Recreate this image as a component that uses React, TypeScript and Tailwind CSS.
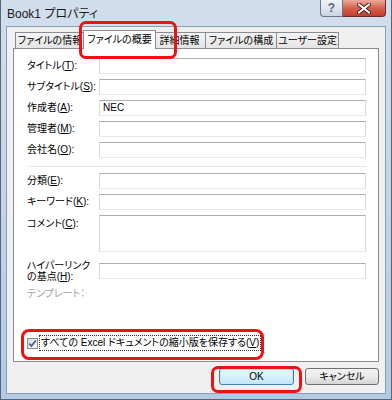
import React from 'react'

// Win7 style "Book1 プロパティ" dialog, summary tab selected

function Key({ k }: { k: string }) {
  return (
    <>
      (<span className="underline underline-offset-[1px]">{k}</span>):
    </>
  )
}

function Box({ className = '', children }: { className?: string; children?: React.ReactNode }) {
  return (
    <div className={`w-[267px] bg-white border border-t-[#abadb3] border-x-[#d5d9e0] border-b-[#e3e9ef] ${className}`}>
      {children}
    </div>
  )
}

function Row({ label, k, value }: { label: string; k: string; value?: string }) {
  return (
    <div className="flex h-[16px] items-center">
      <div className="w-[72px] whitespace-nowrap">
        {label}
        <Key k={k} />
      </div>
      <Box className="flex h-[16px] items-center pl-[3px]">{value}</Box>
    </div>
  )
}

const tabs = [
  { label: 'ファイルの情報', w: 'w-[70px]' },
  { label: 'ファイルの概要', w: 'w-[69px]', active: true },
  { label: '詳細情報', w: 'w-[52px]' },
  { label: 'ファイルの構成', w: 'w-[71px]' },
  { label: 'ユーザー設定', w: 'w-[62px]' }
]

export default function App() {
  return (
    <div className="relative flex h-[400px] w-[392px] flex-col overflow-hidden border-x border-b border-[#55657a] bg-linear-to-b from-[#d2deec] via-[#c3d4e9] to-[#b3cae5] font-['Liberation_Sans','Noto_Sans_CJK_JP',sans-serif] text-[10px] leading-none text-black [font-feature-settings:'palt']">
      {/* title bar */}
      <div className="flex h-[26px] shrink-0 items-start">
        <div className="pl-[6px] pt-[8px] text-[12px] text-[#1a1a1a]">Book1 プロパティ</div>
        <div className="mr-[5px] ml-auto flex">
          <div className="flex h-[17px] w-[23px] items-center justify-center rounded-bl-[4px] border border-t-0 border-[#6b7688] bg-linear-to-b from-[#eef2f7] via-[#dfe6ee] to-[#c9d4e1] text-[12px] font-bold text-[#596579]">
            ?
          </div>
          <div className="flex h-[17px] w-[43px] items-center justify-center rounded-br-[4px] border border-t-0 border-l-0 border-[#6e2a22] bg-linear-to-b from-[#e9ab9c] via-[#d4604f] to-[#c23d2b]">
            <svg width="14" height="11" viewBox="0 0 14 11">
              <path d="M2 1.5 L12 9.5 M12 1.5 L2 9.5" stroke="#4a1c16" strokeWidth="4" strokeLinecap="round" />
              <path d="M2 1.5 L12 9.5 M12 1.5 L2 9.5" stroke="#ffffff" strokeWidth="2.2" strokeLinecap="round" />
            </svg>
          </div>
        </div>
      </div>

      {/* client area */}
      <div className="ml-[5px] flex h-[368px] w-[380px] flex-col border border-[#8d9db1] bg-[#f0f0f0]">
        <div className="ml-[6px] mt-[3px] w-[366px]">
          {/* tabs */}
          <div className="flex h-[18px] items-end pl-[2px]">
            {tabs.map((t) =>
              t.active ? (
                <div
                  key={t.label}
                  className="relative z-10 -mx-[2px] -mb-px flex h-[19px] w-[73px] items-center justify-center border border-b-0 border-[#898c95] bg-white pb-[1px]"
                >
                  {t.label}
                </div>
              ) : (
                <div
                  key={t.label}
                  className={`${t.w} flex h-[16px] items-center justify-center border border-b-0 border-l-0 first:border-l border-[#898c95] bg-linear-to-b from-[#f4f4f4] to-[#e4e4e4] whitespace-nowrap`}
                >
                  {t.label}
                </div>
              )
            )}
          </div>

          {/* panel */}
          <div className="flex h-[314px] flex-col border border-[#898c95] bg-white pl-[13px] pt-[9px]">
            <div className="flex flex-col gap-[5px]">
              <Row label="タイトル" k="T" />
              <Row label="サブタイトル" k="S" />
              <Row label="作成者" k="A" value="NEC" />
              <Row label="管理者" k="M" />
              <Row label="会社名" k="O" />
            </div>
            <div className="mt-[8px] h-px w-[339px] bg-[#e2e8f0]" />
            <div className="mt-[6px] flex flex-col gap-[5px]">
              <Row label="分類" k="E" />
              <Row label="キーワード" k="K" />
              <div className="flex items-start">
                <div className="w-[72px] pt-[4px] whitespace-nowrap">
                  コメント
                  <Key k="C" />
                </div>
                <Box className="h-[37px]" />
              </div>
            </div>
            <div className="mt-[8px] flex items-center">
              <div className="w-[72px] leading-[11px] whitespace-nowrap">
                ハイパーリンク
                <br />
                の基点
                <Key k="H" />
              </div>
              <Box className="h-[16px]" />
            </div>
            <div className="mt-[7px] text-[#a0a0a0]">テンプレート：</div>

            <div className="mt-auto mb-[10px] flex h-[16px] items-center">
              <div className="flex h-[11px] w-[11px] items-center justify-center border border-[#8e8f8f] bg-linear-to-br from-[#dcdcdc] to-[#fbfbfb]">
                <svg width="9" height="9" viewBox="0 0 9 9">
                  <path d="M1.2 4.6 L3.4 7 L7.8 1.4" fill="none" stroke="#3c5a9a" strokeWidth="1.6" />
                </svg>
              </div>
              <div className="ml-[1px] flex h-[16px] items-center border border-dotted border-[#333] px-px">
                すべての Excel ドキュメントの縮小版を保存する
                <span>
                  (<span className="underline underline-offset-[1px]">V</span>)
                </span>
              </div>
            </div>
          </div>
        </div>

        {/* buttons */}
        <div className="mt-[6px] flex justify-end gap-[11px] pr-[6px]">
          <div className="flex h-[17px] w-[75px] items-center justify-center rounded-[3px] border border-[#3c7fb1] bg-linear-to-b from-[#eaf6fd] via-[#d9f0fc] to-[#bee6fd] shadow-[inset_0_0_0_1px_#c4e5f6]">
            OK
          </div>
          <div className="flex h-[17px] w-[74px] items-center justify-center rounded-[3px] border border-[#707070] bg-linear-to-b from-[#f2f2f2] via-[#ebebeb] to-[#d4d4d4]">
            キャンセル
          </div>
        </div>
      </div>

      {/* red annotation marks */}
      <div className="absolute left-[78px] top-[21px] h-[38px] w-[98px] rounded-[7px] border-[3px] border-[#ee1111]" />
      <div className="absolute left-[20px] top-[329px] h-[31px] w-[243px] rounded-[8px] border-[3px] border-[#ee1111]" />
      <div className="absolute left-[210px] top-[366px] h-[27px] w-[91px] rounded-[7px] border-[3px] border-[#ee1111]" />
    </div>
  )
}
